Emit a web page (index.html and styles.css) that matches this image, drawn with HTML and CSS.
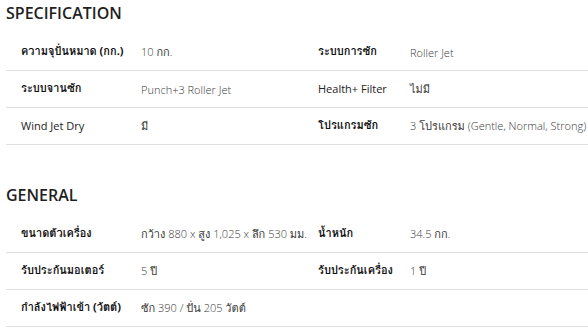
FILE: index.html
```html
<!DOCTYPE html>
<html lang="th">
<head>
<meta charset="utf-8">
<link rel="stylesheet" href="styles.css">
</head>
<body>
<section class="spec">
  <h2 class="spec-title">SPECIFICATION</h2>
  <div class="spec-table">
    <div class="row">
      <div class="label">ความจุปั่นหมาด (กก.)</div>
      <div class="value">10 กก.</div>
      <div class="label">ระบบการซัก</div>
      <div class="value">Roller Jet</div>
    </div>
    <div class="row">
      <div class="label">ระบบจานซัก</div>
      <div class="value">Punch+3 Roller Jet</div>
      <div class="label latin">Health+ Filter</div>
      <div class="value">ไม่มี</div>
    </div>
    <div class="row">
      <div class="label latin">Wind Jet Dry</div>
      <div class="value">มี</div>
      <div class="label">โปรแกรมซัก</div>
      <div class="value">3 โปรแกรม (Gentle, Normal, Strong)</div>
    </div>
  </div>
</section>
<section class="spec general">
  <h2 class="spec-title">GENERAL</h2>
  <div class="spec-table">
    <div class="row">
      <div class="label">ขนาดตัวเครื่อง</div>
      <div class="value">กว้าง 880 x สูง 1,025 x ลึก 530 มม.</div>
      <div class="label">น้ำหนัก</div>
      <div class="value">34.5 กก.</div>
    </div>
    <div class="row">
      <div class="label">รับประกันมอเตอร์</div>
      <div class="value">5 ปี</div>
      <div class="label">รับประกันเครื่อง</div>
      <div class="value">1 ปี</div>
    </div>
    <div class="row">
      <div class="label">กำลังไฟฟ้าเข้า (วัตต์)</div>
      <div class="value">ซัก 390 / ปั่น 205 วัตต์</div>
      <div class="label"></div>
      <div class="value"></div>
    </div>
  </div>
</section>
</body>
</html>
```
FILE: styles.css
```css
html, body {
  margin: 0;
  padding: 0;
  background: #fff;
  overflow: hidden;
}
body {
  width: 588px;
  height: 336px;
  padding-left: 6px;
  box-sizing: border-box;
  font-family: "Open Sans", "Loma", "Noto Sans Thai Looped", "Noto Sans Thai", "Noto Sans", sans-serif;
  color: #333;
}
.spec-title {
  margin: 0;
  height: 26px;
  line-height: 26px;
  font-size: 16px;
  font-weight: 600;
  color: #1f1f1f;
}
.spec-table {
  margin-top: 8px;
}
.general {
  margin-top: 37px;
}
.row {
  display: grid;
  grid-template-columns: 135px 162px 107px 1fr;
  height: 36px;
  align-items: center;
  border-bottom: 1px solid #e0e0e0;
  font-size: 11px;
}
.label {
  padding-left: 15px;
  font-weight: 700;
  color: #111;
  white-space: nowrap;
  padding-bottom: 2px;
}
.label.latin {
  font-weight: 400;
  color: #222;
}
.value {
  color: #3a3a3a;
  white-space: nowrap;
  font-weight: 300;
}
```
